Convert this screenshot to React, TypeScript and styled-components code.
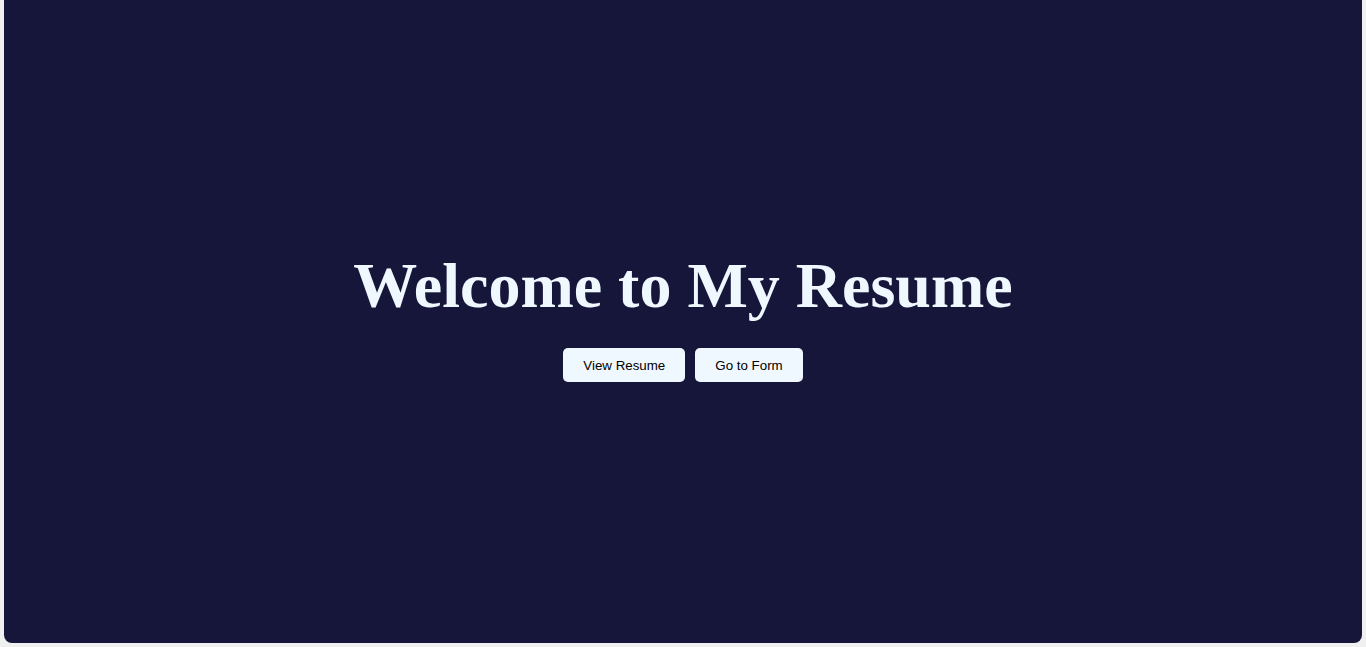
import React from "react";
import styled, { createGlobalStyle } from "styled-components";

const GlobalStyle = createGlobalStyle`
  html, body {
    margin: 0;
    padding: 0;
    background: #f0f0f0;
  }
  body {
    font-family: "Liberation Serif", "Times New Roman", serif;
  }
`;

const Page = styled.div`
  padding: 0 4px 4px;
`;

const Hero = styled.main`
  height: 643px;
  box-sizing: border-box;
  background: #16163a;
  border-radius: 0 0 8px 8px;
  display: flex;
  flex-direction: column;
  align-items: center;
  justify-content: center;
  padding-bottom: 12px;
`;

const Title = styled.h1`
  margin: 0 0 26px;
  font-family: "Liberation Serif", "Times New Roman", serif;
  font-weight: 700;
  font-size: 64px;
  line-height: 1.15;
  color: #f0f8ff;
`;

const Actions = styled.div`
  display: flex;
  gap: 10px;
`;

const Button = styled.button`
  font-family: "Liberation Sans", Arial, sans-serif;
  font-size: 13.33px;
  color: #000;
  background: #f0f8ff;
  border: none;
  border-radius: 5px;
  padding: 0 20px;
  height: 34px;
  cursor: pointer;
`;

export default function App() {
  return (
    <>
      <GlobalStyle />
      <Page>
        <Hero>
          <Title>Welcome to My Resume</Title>
          <Actions>
            <Button>View Resume</Button>
            <Button>Go to Form</Button>
          </Actions>
        </Hero>
      </Page>
    </>
  );
}
